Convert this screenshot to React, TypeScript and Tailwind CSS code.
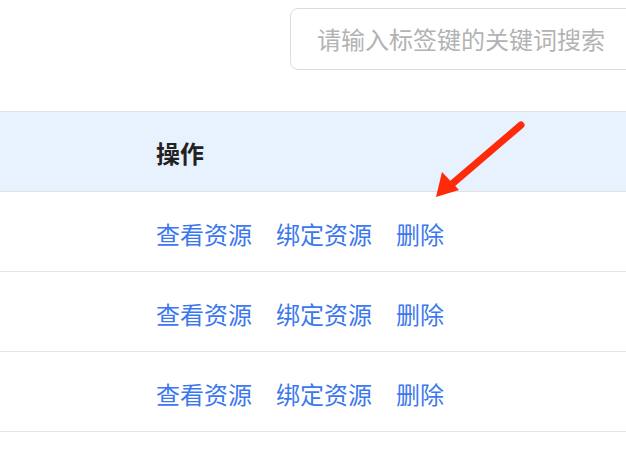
import React from "react";

const font = { fontFamily: '"Noto Sans CJK SC", "Noto Sans", sans-serif' };

function Row() {
  return (
    <div className="flex h-[80px] items-center border-b border-[#e4e4e4] pl-[156px] pt-[5px] text-[24px] text-[#3b78ee]">
      <span>查看资源</span>
      <span className="ml-[24px]">绑定资源</span>
      <span className="ml-[24px]">删除</span>
    </div>
  );
}

export default function App() {
  return (
    <div className="relative h-[464px] w-[626px] overflow-hidden bg-white" style={font}>
      <div className="h-[111px] pl-[290px] pt-[8px]">
        <div className="flex h-[62px] w-[400px] items-center rounded-[8px] border border-[#dcdcdc] pl-[26px] text-[24px] text-[#b3b3b3]">
          请输入标签键的关键词搜索
        </div>
      </div>
      <div className="border-y border-[#e2e2e2] bg-[#e8f2fe]">
        <div className="flex h-[79px] items-center pl-[156px] pt-[2px] text-[24px] font-bold text-[#222]">
          操作
        </div>
      </div>
      <Row />
      <Row />
      <Row />
      <svg className="absolute left-0 top-0" width="626" height="464" viewBox="0 0 626 464">
        <line x1="521" y1="125" x2="452" y2="184" stroke="#ff2a0a" strokeWidth="7" strokeLinecap="round" />
        <polygon points="436,197 442,172 459,190" fill="#ff2a0a" />
      </svg>
    </div>
  );
}
